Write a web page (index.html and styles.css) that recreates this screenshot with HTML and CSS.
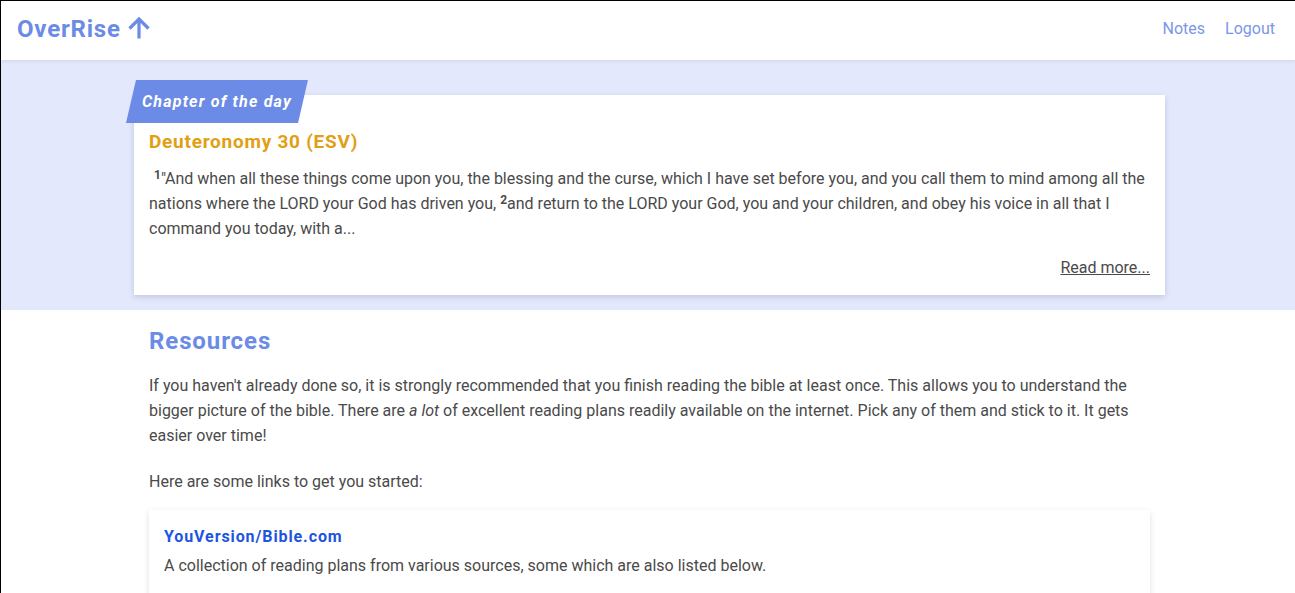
FILE: index.html
```html
<!DOCTYPE html>
<html>
<head>
<meta charset="utf-8">
<link rel="stylesheet" href="styles.css">
</head>
<body>
<div class="frame">
  <header class="navbar">
    <a class="brand" href="#">OverRise
      <svg class="brand-icon" viewBox="0 0 24 24" width="24" height="24"><path d="M12 22.5V3M2.5 12.5L12 3L21.5 12.5" fill="none" stroke="currentColor" stroke-width="3.2" stroke-linecap="butt" stroke-linejoin="miter"/></svg>
    </a>
    <nav class="nav-links">
      <a href="#">Notes</a>
      <a href="#">Logout</a>
    </nav>
  </header>
  <section class="hero">
    <div class="card chapter">
      <div class="tag"><span>Chapter of the day</span></div>
      <h2 class="chapter-title">Deuteronomy 30 (ESV)</h2>
      <p class="verse"><sup class="first">1</sup>"And when all these things come upon you, the blessing and the curse, which I have set before you, and you call them to mind among all the nations where the LORD your God has driven you, <sup>2</sup>and return to the LORD your God, you and your children, and obey his voice in all that I command you today, with a...</p>
      <div class="more"><a href="#">Read more...</a></div>
    </div>
  </section>
  <main class="content">
    <h1 class="section-title">Resources</h1>
    <p>If you haven't already done so, it is strongly recommended that you finish reading the bible at least once. This allows you to understand the bigger picture of the bible. There are <em>a lot</em> of excellent reading plans readily available on the internet. Pick any of them and stick to it. It gets easier over time!</p>
    <p class="gap">Here are some links to get you started:</p>
    <div class="resource">
      <a class="resource-title" href="#">YouVersion/Bible.com</a>
      <p>A collection of reading plans from various sources, some which are also listed below.</p>
    </div>
  </main>
</div>
</body>
</html>
```
FILE: styles.css
```css
* { box-sizing: border-box; }
html, body { margin: 0; padding: 0; }
body {
  font-family: Roboto, "Liberation Sans", sans-serif;
  color: #4a4a4a;
  font-size: 16px;
  background: #fff;
  overflow: hidden;
}
.frame {
  border-top: 1px solid #000;
  border-left: 1px solid #000;
  min-height: 593px;
}
a { text-decoration: none; }
.navbar {
  height: 59px;
  display: flex;
  align-items: center;
  justify-content: space-between;
  padding: 0 20px 4px 16px;
  background: #fff;
  position: relative;
  z-index: 2;
  box-shadow: 0 2px 3px rgba(0,0,0,0.06);
}
.brand {
  display: flex;
  align-items: center;
  gap: 6px;
  color: #6b8be6;
  font-weight: 700;
  font-size: 24px;
  letter-spacing: 0.8px;
}
.brand-icon { display: block; margin-top: -1px; }
.nav-links { display: flex; gap: 20px; }
.nav-links a { color: #7b96e8; font-size: 16px; }
.hero {
  background: #e3e8fc;
  padding: 35px 0 15px;
}
.card {
  background: #fff;
  box-shadow: 0 2px 6px rgba(10,10,60,0.15);
}
.chapter {
  width: 1031px;
  margin-left: 133px;
  padding: 34px 15px 15px;
  position: relative;
}
.tag {
  position: absolute;
  left: -3px;
  top: -15px;
  width: 172px;
  height: 43px;
  display: flex;
  align-items: center;
  padding-left: 11px;
}
.tag::before {
  content: "";
  position: absolute;
  inset: 0;
  background: #6b8be6;
  transform: skewX(-13deg);
}
.tag span {
  position: relative;
  color: #fff;
  font-weight: 700;
  font-style: italic;
  font-size: 16px;
  letter-spacing: 1.2px;
}
.chapter-title {
  margin: 0;
  color: #e0a011;
  font-size: 19px;
  font-weight: 700;
  letter-spacing: 0.75px;
  line-height: 25px;
}
.verse {
  margin: 12px 0 0;
  line-height: 25px;
}
.verse sup {
  font-weight: 700;
  font-size: 12px;
  line-height: 0;
  vertical-align: 0;
  position: relative;
  top: -5px;
}
.verse sup.first { margin-left: 5px; }
.more {
  text-align: right;
  margin-top: 15px;
  line-height: 24px;
}
.more a { color: #4a4a4a; text-decoration: underline; }
.content {
  width: 1001px;
  margin-left: 148px;
  padding-top: 14px;
}
.section-title {
  margin: 0 0 15px;
  color: #6b8be6;
  font-size: 24px;
  font-weight: 700;
  letter-spacing: 0.9px;
  line-height: 34px;
}
.content p { margin: 0; line-height: 25px; }
.content p.gap { margin-top: 21px; }
.resource {
  margin-top: 16px;
  padding: 14px 15px 20px;
  background: #fff;
  box-shadow: 0 2px 6px rgba(0,0,0,0.12);
}
.resource-title {
  display: block;
  color: #1d55e0;
  font-weight: 700;
  font-size: 16px;
  letter-spacing: 0.9px;
  line-height: 25px;
}
.resource p { margin-top: 4px; }
```
